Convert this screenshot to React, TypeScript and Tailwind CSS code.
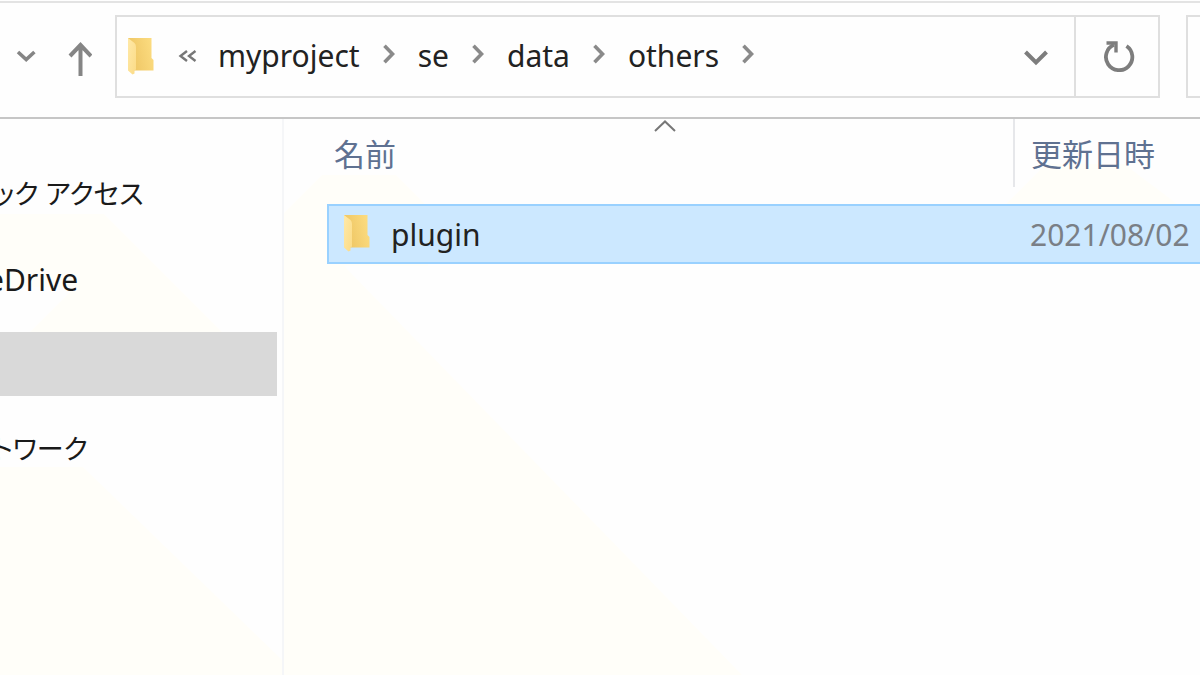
import { Fragment } from "react";

type Entry = {
    name: string;
    modified: string;
}

const crumbs = ['myproject', 'se', 'data', 'others'];

const entries: Entry[] = [
    { name: 'plugin', modified: '2021/08/02' }
];

const places = [
    { label: 'クイック アクセス', className: "text-[27px]" },
    { label: 'OneDrive', className: "text-[30px]" },
    { label: '', className: "bg-[#d9d9d9]" },
    { label: 'ネットワーク', className: "text-[27px]" }
];

function FolderIcon() {
    return (
        <svg className="w-7 h-10 shrink-0" viewBox="0 0 28 40" aria-hidden="true">
            <defs>
                <linearGradient id="folder-back" x1="0" x2="1" y1="0.6" y2="0.3">
                    <stop offset="0" stopColor="#edc462" />
                    <stop offset="1" stopColor="#fcdc80" />
                </linearGradient>
                <linearGradient id="folder-front" x1="0" x2="1" y1="0" y2="1">
                    <stop offset="0" stopColor="#ffe9a8" />
                    <stop offset="1" stopColor="#fbdb86" />
                </linearGradient>
            </defs>
            <path d="M1 2H24.500V22L26.500 24V34.500H7L1 34Z" fill="url(#folder-back)" />
            <path d="M1 2L7.500 7Q9 8.500 9 11V33.500L7.500 34.500V37.500L5.500 38.500L1 34.500Z" fill="url(#folder-front)" />
        </svg>
    );
}

function CrumbChevron() {
    return (
        <svg className="w-3 h-5 mb-1 shrink-0" viewBox="0 0 12 20" fill="none" stroke="#8a8a8a" strokeWidth="3.6" aria-hidden="true">
            <path d="M1.500 1.800L9.500 10L1.500 18.200" />
        </svg>
    );
}

function AddressBar() {
    return (
        <header className="flex items-center h-[118px] pb-2 border-t-2 border-b-2 border-t-[#e3e3e3] border-b-[#c6c6c6] mt-px">
            <button className="ml-4 w-5 flex justify-center" aria-label="最近表示した場所">
                <svg className="w-5 h-3" viewBox="0 0 20 12" fill="none" stroke="#858585" strokeWidth="3.6">
                    <path d="M2 2L10.200 9.500L18.400 2" />
                </svg>
            </button>
            <button className="ml-8 w-6" aria-label="上へ">
                <svg className="w-6 h-9 mt-1" viewBox="0 0 24 36" fill="none" stroke="#858585" strokeWidth="4">
                    <path d="M12.500 36V5M2 16L12.500 5L23 16" />
                </svg>
            </button>
            <div className="flex flex-1 items-center h-[83px] ml-[23px] border-2 border-[#dfdfdf]">
                <nav className="flex flex-1 items-center pl-[10px]">
                    <FolderIcon />
                    <svg className="w-5 h-3 ml-[23px] mr-5 shrink-0" viewBox="0 0 20 12" fill="none" stroke="#777" strokeWidth="2.4" aria-hidden="true">
                        <path d="M9 1L2.500 6L9 11M17.500 1L11 6L17.500 11" />
                    </svg>
                    {crumbs.map((crumb) => (
                        <Fragment key={crumb}>
                            <a href="#" className="text-[30px] leading-10 text-[#222]">{crumb}</a>
                            <span className="mx-[23px]"><CrumbChevron /></span>
                        </Fragment>
                    ))}
                </nav>
                <button className="flex items-center justify-center w-[76px] h-full" aria-label="以前の場所">
                    <svg className="w-6 h-4 mt-1" viewBox="0 0 24 16" fill="none" stroke="#7d7d7d" strokeWidth="4">
                        <path d="M1.500 2L12 12.500L22.500 2" />
                    </svg>
                </button>
                <button className="flex items-center justify-center w-[84px] h-full pl-1 border-l-2 border-[#dfdfdf]" aria-label="最新の情報に更新">
                    <svg className="w-8 h-8" viewBox="0 0 32 32" fill="none" stroke="#7d7d7d" strokeWidth="3.800">
                        <path d="M23.500 6A13.200 13.200 0 1 1 11 4.800" />
                        <path d="M3.500 3H13V12.500" strokeWidth="3.400" />
                    </svg>
                </button>
            </div>
            <div className="w-[14px] h-[83px] ml-[26px] border-2 border-r-0 border-[#dfdfdf]" />
        </header>
    );
}

function Sidebar() {
    return (
        <aside className="relative w-[284px] shrink-0 overflow-hidden border-r-2 border-[#f5f6f8]">
            <svg className="absolute inset-0 -z-10 w-full h-full" fill="#fffef9" aria-hidden="true">
                <path d="M0 95H104L222 213H30L75 168L0 168Z" />
                <path d="M0 348H83L283 542V560H0Z" />
            </svg>
            <ul className="flex flex-col gap-[21px] pt-[43px]">
                {places.map((place, index) => (
                    <li key={index} className="h-16 mr-[5px]">
                        {place.label ? (
                            <a href="#" className={`flex items-center h-full -ml-[55px] whitespace-nowrap text-[#1a1a1a] [font-feature-settings:'palt'] ${place.className}`}>
                                {place.label}
                            </a>
                        ) : (
                            <div className={`h-full ${place.className}`} />
                        )}
                    </li>
                ))}
            </ul>
        </aside>
    );
}

function FileList() {
    return (
        <main className="relative flex-1 pl-[33px]">
            <svg className="absolute inset-0 -z-10 w-full h-full" fill="#fffef9" aria-hidden="true">
                <path d="M0 94L38 56H112L144 88V147H60L459 557H0Z" />
                <path d="M722 85L762 45H840L893 85Z" />
            </svg>
            <table className="w-full table-fixed border-separate border-spacing-0 text-left">
                <thead>
                    <tr className="text-[31px] leading-10 text-[#5f7191]">
                        <th className="p-0 pb-[17px] font-normal">
                            <div className="relative flex items-center h-[68px] pl-[17px] pt-0.5 border-r-2 border-[#e6e7ea]">
                                名前
                                <svg className="absolute top-0 left-1/2 -translate-x-1/2 w-6 h-4" viewBox="0 0 24 16" fill="none" stroke="#777" strokeWidth="2">
                                    <path d="M2 12L12 2.500L22 12" />
                                </svg>
                            </div>
                        </th>
                        <th className="w-[185px] p-0 pb-[17px] font-normal">
                            <div className="flex items-center h-[68px] pl-4 pt-0.5">更新日時</div>
                        </th>
                    </tr>
                </thead>
                <tbody>
                    {entries.map((entry) => (
                        <tr key={entry.name} className="text-[30px] leading-10">
                            <td className="p-0 pl-[10px]">
                                <div className="flex items-center h-[60px] pl-[14px] pt-0.5 border-2 border-r-0 border-[#99d1ff] bg-[#cce8ff] text-[#222]">
                                    <div className="mr-5 pb-1"><FolderIcon /></div>
                                    {entry.name}
                                </div>
                            </td>
                            <td className="p-0">
                                <div className="flex items-center h-[60px] pl-[15px] pt-0.5 border-y-2 border-[#99d1ff] bg-[#cce8ff] text-[#7a7f86]">
                                    {entry.modified}
                                </div>
                            </td>
                        </tr>
                    ))}
                </tbody>
            </table>
        </main>
    );
}

export default function App() {
    return (
        <div className="isolate flex flex-col h-screen overflow-hidden bg-[#fefefe] font-['Noto_Sans','Noto_Sans_CJK_JP',sans-serif]">
            <AddressBar />
            <div className="flex flex-1">
                <Sidebar />
                <FileList />
            </div>
        </div>
    );
}
